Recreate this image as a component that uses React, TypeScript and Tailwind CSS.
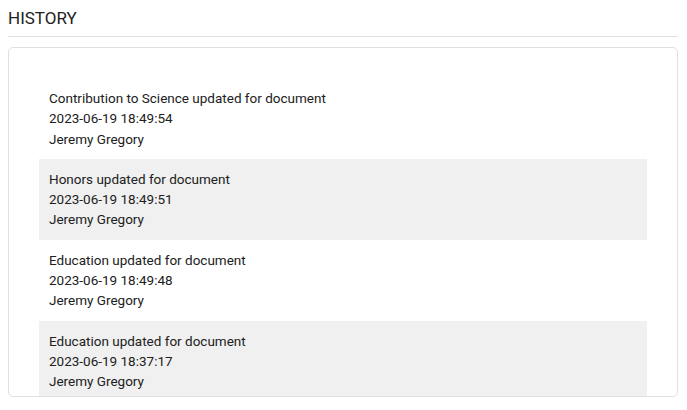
import React from "react";

const items = [
  { title: "Contribution to Science updated for document", date: "2023-06-19 18:49:54", user: "Jeremy Gregory" },
  { title: "Honors updated for document", date: "2023-06-19 18:49:51", user: "Jeremy Gregory" },
  { title: "Education updated for document", date: "2023-06-19 18:49:48", user: "Jeremy Gregory" },
  { title: "Education updated for document", date: "2023-06-19 18:37:17", user: "Jeremy Gregory" },
];

export default function App() {
  return (
    <div className="w-[687px] h-[410px] bg-white overflow-hidden px-2 pt-[7px] text-[#212121]" style={{ fontFamily: "Roboto, 'Liberation Sans', sans-serif" }}>
      <div className="text-[17px] leading-[22px] pb-[7px] border-b border-[#e0e0e0] w-[670px]">HISTORY</div>
      <div className="mt-[10px] w-[670px] h-[350px] border border-[#e0e0e0] rounded-[5px] overflow-hidden px-[30px] pt-[30px]">
        <div className="flex flex-col">
          {items.map((it, i) => (
            <div key={i} className={`px-[10px] py-[10px] text-[13.5px] leading-[20.3px] ${i % 2 === 1 ? "bg-[#f0f0f0]" : "bg-white"}`}>
              <div>{it.title}</div>
              <div>{it.date}</div>
              <div>{it.user}</div>
            </div>
          ))}
        </div>
      </div>
    </div>
  );
}
